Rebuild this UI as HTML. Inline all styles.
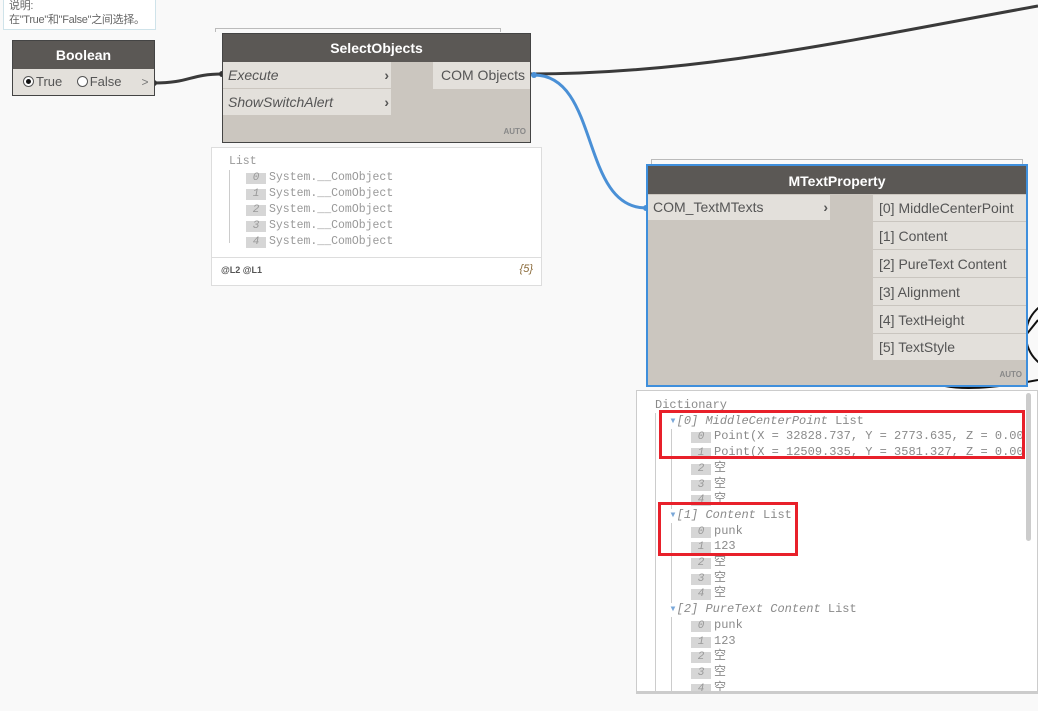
<!DOCTYPE html>
<html><head><meta charset="utf-8"><style>
*{margin:0;padding:0;box-sizing:border-box}
body{width:1038px;height:711px;background:#f9f9f9;position:relative;overflow:hidden;font-family:"Liberation Sans","Noto Sans CJK SC",sans-serif}
.a{position:absolute}
.hdr{background:#5b5855;color:#fff;font-weight:bold;font-size:14px;text-align:center}
.body{background:#cbc6bf}
.port{background:#e3e0db;color:#555;font-size:14px}
.mono{font-family:"Liberation Mono","Noto Sans CJK SC",monospace;font-size:11.5px;color:#999;white-space:pre}
.d{font-size:12px;color:#8a8a8a}
.idx{display:inline-block;width:20px;height:11px;background:#d6d6d6;color:#999;font-style:italic;text-align:center;line-height:11px;margin-right:3px;font-size:11px}
.red{border:3px solid #e8202a}
.rad{display:inline-block;width:11px;height:11px;border:1px solid #555;border-radius:50%;background:#fff;vertical-align:-1px;margin-right:2px;position:relative}
.rad.on::after{content:"";position:absolute;left:2px;top:2px;width:5px;height:5px;border-radius:50%;background:#111}
</style></head><body>
<svg class="a" style="left:0;top:0" width="1038" height="711">
<path d="M154 83 C190 83,190 74,222 74" stroke="#3a3a3a" stroke-width="3" fill="none"/>
<path d="M530 74 C700 74,850 40,1038 6" stroke="#3a3a3a" stroke-width="3" fill="none"/>
<path d="M534 75 C600 75,580 208,646 208" stroke="#4a90d6" stroke-width="3" fill="none"/>
<circle cx="1062" cy="335" r="36" stroke="#111" stroke-width="2" fill="none"/>
<path d="M1026 335 L1038 320" stroke="#111" stroke-width="2"/>
<path d="M945 386 Q975 392 1038 380" stroke="#111" stroke-width="2" fill="none"/>
<circle cx="154" cy="83" r="3" fill="#333"/><circle cx="222" cy="74" r="3" fill="#333"/>
<circle cx="534" cy="75" r="3" fill="#4a90d6"/><circle cx="646" cy="208" r="3" fill="#4a90d6"/>
</svg>
<!-- tooltip -->
<div class="a" style="left:3px;top:-4px;width:153px;height:34px;background:#fff;border:1px solid #cfe3ea;font-size:11px;color:#666;line-height:14px;padding:2px 5px;white-space:nowrap;letter-spacing:-0.3px">说明:<br>在"True"和"False"之间选择。</div>
<!-- Boolean -->
<div class="a" style="left:12px;top:40px;width:143px;height:56px;border:1px solid #444;background:#cbc6bf">
<div class="hdr" style="height:28px;line-height:28px">Boolean</div>
<div class="port a" style="left:0;top:28px;width:123px;height:26px;line-height:26px;font-size:13px;padding-left:10px"><span class="rad on"></span>True &nbsp;&nbsp;&nbsp;<span class="rad"></span>False</div>
<div class="a" style="left:123px;top:28px;width:18px;height:26px;line-height:26px;color:#777;font-size:12px;background:#e3e0db;text-align:center">&gt;</div>
</div>
<!-- SelectObjects -->
<div class="a" style="left:215px;top:28px;width:286px;height:4px;border:1px solid #bbb;border-bottom:none"></div>
<div class="a body" style="left:222px;top:33px;width:309px;height:110px;border:1px solid #444">
<div class="hdr" style="height:28px;line-height:28px">SelectObjects</div>
<div class="port a" style="left:0;top:28px;width:168px;height:26px;line-height:26px;padding-left:5px;font-style:italic">Execute<span style="position:absolute;right:2px;font-weight:bold;font-style:normal">›</span></div>
<div class="port a" style="left:0;top:55px;width:168px;height:26px;line-height:26px;padding-left:5px;font-style:italic">ShowSwitchAlert<span style="position:absolute;right:2px;font-weight:bold;font-style:normal">›</span></div>
<div class="port a" style="left:210px;top:28px;width:97px;height:27px;line-height:26px;padding-left:8px">COM Objects</div>
<div class="a" style="right:4px;bottom:6px;font-size:8px;font-weight:bold;color:#888">AUTO</div>
</div>
<!-- preview list -->
<div class="a" style="left:211px;top:147px;width:331px;height:139px;background:#fff;border:1px solid #ddd">
<div class="a" style="left:0;top:109px;width:329px;border-top:1px solid #ddd"></div>
<div class="a" style="left:17px;top:22px;height:73px;border-left:1px solid #ccc"></div>
<div class="a mono" style="left:17px;top:6px;line-height:16px">List
<div style="padding-left:17px"><span class="idx">0</span>System.__ComObject
<span class="idx">1</span>System.__ComObject
<span class="idx">2</span>System.__ComObject
<span class="idx">3</span>System.__ComObject
<span class="idx">4</span>System.__ComObject</div></div>
<div class="a" style="left:9px;top:117px;font-size:9px;color:#555;font-weight:bold">@L2 @L1</div>
<div class="a" style="right:8px;top:115px;font-size:11px;color:#8a6a3a;font-style:italic">{5}</div>
</div>
<!-- MTextProperty -->
<div class="a" style="left:651px;top:159px;width:372px;height:6px;border:1px solid #bbb;border-bottom:none"></div>
<div class="a body" style="left:646px;top:164px;width:382px;height:223px;border:2px solid #3f8fdc">
<div class="hdr" style="height:28px;line-height:30px">MTextProperty</div>
<div class="port a" style="left:0;top:29px;width:182px;height:25px;line-height:25px;padding-left:5px">COM_TextMTexts<span style="position:absolute;right:2px;font-weight:bold">›</span></div>
<div class="a" style="left:225px;top:29px;width:153px">
<div class="port" style="height:27px;line-height:27px;padding-left:6px;border-bottom:1px solid #c9c5bf">[0] MiddleCenterPoint</div>
<div class="port" style="height:28px;line-height:28px;padding-left:6px;border-bottom:1px solid #c9c5bf">[1] Content</div>
<div class="port" style="height:28px;line-height:28px;padding-left:6px;border-bottom:1px solid #c9c5bf">[2] PureText Content</div>
<div class="port" style="height:28px;line-height:28px;padding-left:6px;border-bottom:1px solid #c9c5bf">[3] Alignment</div>
<div class="port" style="height:28px;line-height:28px;padding-left:6px;border-bottom:1px solid #c9c5bf">[4] TextHeight</div>
<div class="port" style="height:26px;line-height:26px;padding-left:6px">[5] TextStyle</div>
</div>
<div class="a" style="right:4px;bottom:6px;font-size:8px;font-weight:bold;color:#888">AUTO</div>
</div>
<!-- Dictionary -->
<div class="a" style="left:636px;top:390px;width:402px;height:304px;background:#fff;border:1px solid #ccc;border-bottom:3px solid #ccc;overflow:hidden">
<div class="a" style="left:389px;top:2px;width:5px;height:148px;background:#ccc;border-radius:3px"></div>
<div class="a" style="left:18px;top:22px;height:290px;border-left:1px solid #ccc"></div>
<div class="a" style="left:34px;top:38px;height:80px;border-left:1px solid #ccc"></div>
<div class="a" style="left:34px;top:132px;height:80px;border-left:1px solid #ccc"></div>
<div class="a" style="left:34px;top:226px;height:80px;border-left:1px solid #ccc"></div>
<div class="a mono d" style="left:18px;top:7px;line-height:15.7px">Dictionary
  <span style="color:#7aa7d8">▾</span><i>[0] MiddleCenterPoint</i> List
     <span class="idx">0</span>Point(X = 32828.737, Y = 2773.635, Z = 0.00
     <span class="idx">1</span>Point(X = 12509.335, Y = 3581.327, Z = 0.00
     <span class="idx">2</span>空
     <span class="idx">3</span>空
     <span class="idx">4</span>空
  <span style="color:#7aa7d8">▾</span><i>[1] Content</i> List
     <span class="idx">0</span>punk
     <span class="idx">1</span>123
     <span class="idx">2</span>空
     <span class="idx">3</span>空
     <span class="idx">4</span>空
  <span style="color:#7aa7d8">▾</span><i>[2] PureText Content</i> List
     <span class="idx">0</span>punk
     <span class="idx">1</span>123
     <span class="idx">2</span>空
     <span class="idx">3</span>空
     <span class="idx">4</span>空</div>
</div>
<div class="a red" style="left:659px;top:410px;width:366px;height:49px"></div>
<div class="a red" style="left:658px;top:502px;width:140px;height:54px"></div>
</body></html>
